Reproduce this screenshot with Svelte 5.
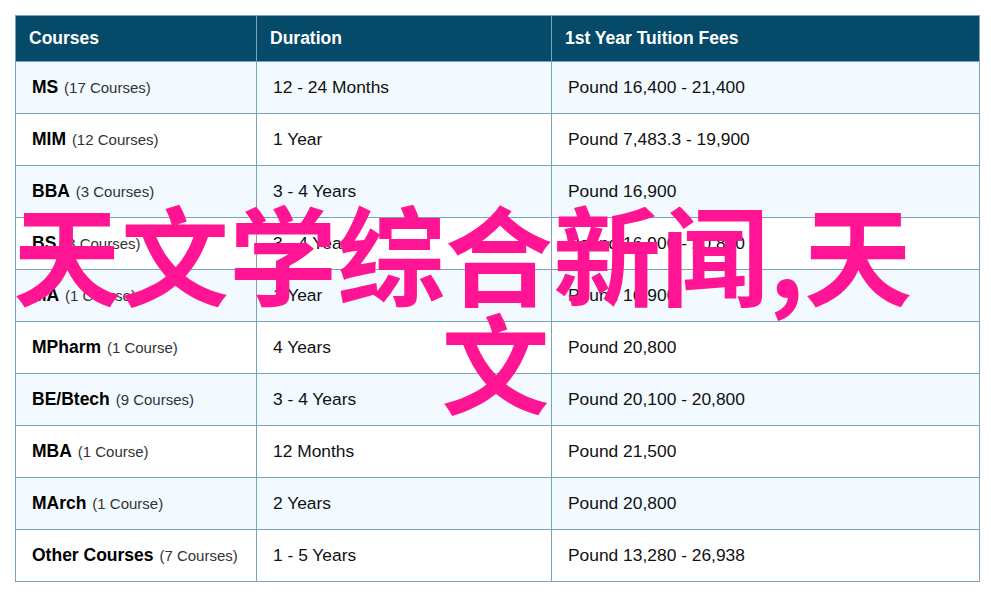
<script>
  const rows = [
    ['MS', '(17 Courses)', '12 - 24 Months', 'Pound 16,400 - 21,400'],
    ['MIM', '(12 Courses)', '1 Year', 'Pound 7,483.3 - 19,900'],
    ['BBA', '(3 Courses)', '3 - 4 Years', 'Pound 16,900'],
    ['BS', '(3 Courses)', '3 - 4 Years', 'Pound 16,900 - 20,800'],
    ['MA', '(1 Course)', '1 Year', 'Pound 16,900'],
    ['MPharm', '(1 Course)', '4 Years', 'Pound 20,800'],
    ['BE/Btech', '(9 Courses)', '3 - 4 Years', 'Pound 20,100 - 20,800'],
    ['MBA', '(1 Course)', '12 Months', 'Pound 21,500'],
    ['MArch', '(1 Course)', '2 Years', 'Pound 20,800'],
    ['Other Courses', '(7 Courses)', '1 - 5 Years', 'Pound 13,280 - 26,938']
  ];
</script>

<div class="page">
  <table>
    <thead>
      <tr><th class="c1">Courses</th><th class="c2">Duration</th><th>1st Year Tuition Fees</th></tr>
    </thead>
    <tbody>
      {#each rows as r}
        <tr>
          <td class="c1"><strong>{r[0]}</strong> <span>{r[1]}</span></td>
          <td class="c2">{r[2]}</td>
          <td>{r[3]}</td>
        </tr>
      {/each}
    </tbody>
  </table>
  <div class="title">
    <div class="line1">天文学综合新闻,天</div>
    <div>文</div>
  </div>
</div>

<style>
  :global(body) { margin: 0; background: #fff; }
  .page {
    position: relative;
    width: 991px;
    height: 597px;
    padding: 15px 11px 0 15px;
    box-sizing: border-box;
    font-family: "Liberation Sans", Arial, sans-serif;
    overflow: hidden;
  }
  table {
    border-collapse: collapse;
    width: 965px;
    table-layout: fixed;
    color: #111;
  }
  th, td { border: 1px solid #7aa3b8; text-align: left; padding: 0; box-sizing: border-box; }
  th {
    background: #054a69;
    color: #fff;
    font-size: 17.5px;
    font-weight: bold;
    height: 46px;
    padding-left: 13px;
  }
  td {
    height: 52px;
    font-size: 17.4px;
    padding-left: 16px;
  }
  .c1 { width: 241px; }
  .c2 { width: 295px; }
  tbody tr:nth-child(odd) td { background: #f2f9ff; }
  strong { color: #000; font-weight: bold; font-size: 17.5px; }
  span { font-size: 15px; color: #333; margin-left: 1px; }
  .title {
    position: absolute;
    left: 0;
    top: 197px;
    width: 991px;
    text-align: center;
    color: #ff1493;
    font-family: "Noto Sans CJK SC", "Noto Sans", sans-serif;
    font-size: 108px;
    font-weight: 700;
    line-height: 108px;
  }
  .line1 { margin-right: 66px; white-space: nowrap; }
</style>
